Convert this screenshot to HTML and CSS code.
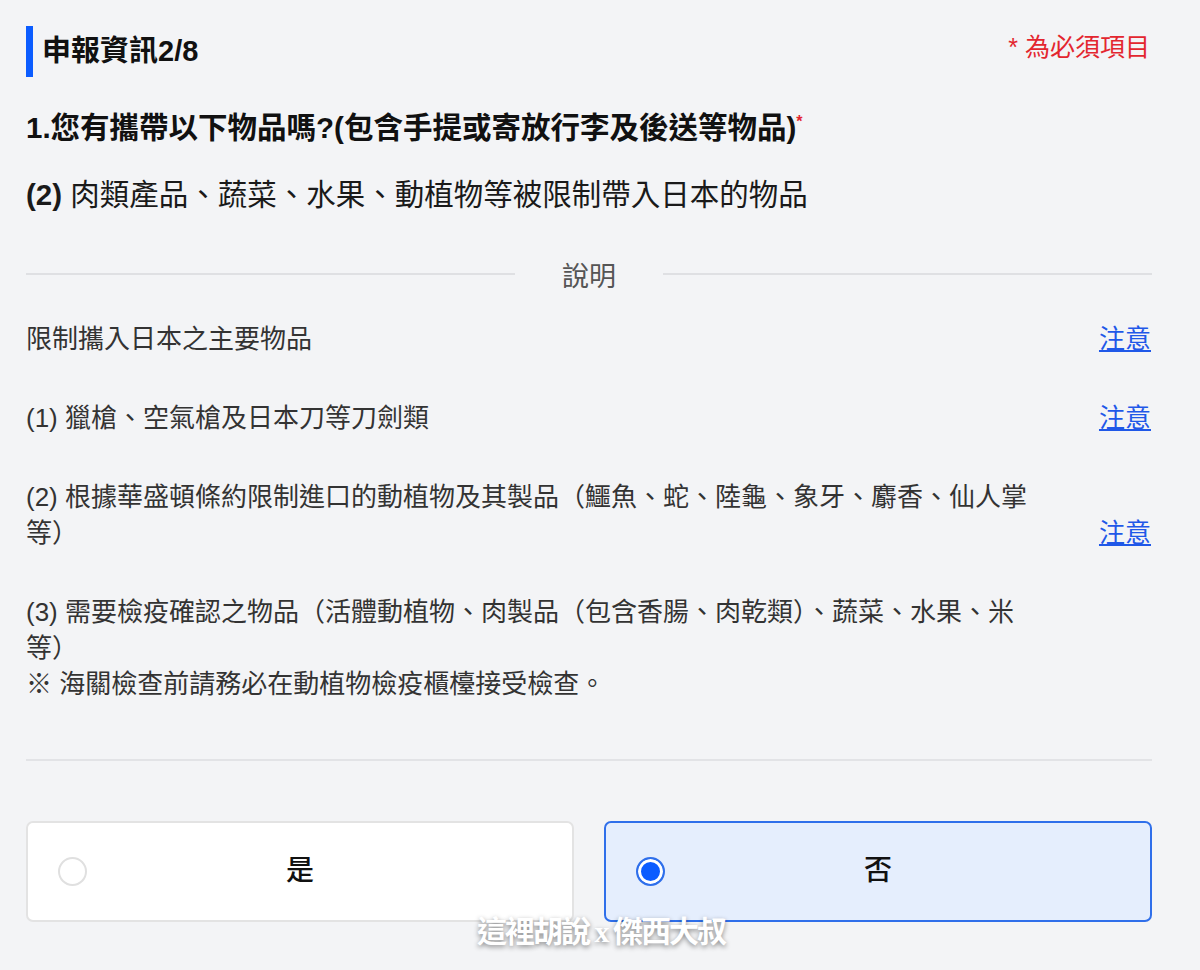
FILE: index.html
```html
<!DOCTYPE html>
<html lang="zh-Hant">
<head>
    <meta charset="UTF-8">
    <meta name="viewport" content="width=device-width, initial-scale=1.0">
    <title>申報資訊</title>
    <link rel="stylesheet" href="styles.css">
</head>
<body>

    <div class="container">
        <div class="header">
            <h2 class="title">申報資訊2/8</h2>
            <span class="required">* 為必須項目</span>
        </div>

        <p class="question">1.您有攜帶以下物品嗎?(包含手提或寄放行李及後送等物品)<span class="star">*</span></p>
        <p class="item"><b>(2)</b> 肉類產品、蔬菜、水果、動植物等被限制帶入日本的物品</p>

        <div class="divider"><span>說明</span></div>

        <ul class="notes">
            <li><span class="note-text">限制攜入日本之主要物品</span><a href="#">注意</a></li>
            <li><span class="note-text">(1) 獵槍、空氣槍及日本刀等刀劍類</span><a href="#">注意</a></li>
            <li><span class="note-text">(2) 根據華盛頓條約限制進口的動植物及其製品（鱷魚、蛇、陸龜、象牙、麝香、仙人掌等）</span><a href="#">注意</a></li>
            <li><span class="note-text">(3) 需要檢疫確認之物品（活體動植物、肉製品（包含香腸、肉乾類）、蔬菜、水果、米等）<br>※ 海關檢查前請務必在動植物檢疫櫃檯接受檢查。</span></li>
        </ul>

        <hr class="line">

        <div class="choices">
            <label class="choice">
                <input type="radio" name="answer" value="yes">
                <span class="choice-label">是</span>
            </label>
            <label class="choice checked">
                <input type="radio" name="answer" value="no" checked>
                <span class="choice-label">否</span>
            </label>
        </div>
    </div>

    <div class="watermark">這裡胡說 x 傑西大叔</div>

</body>
</html>
```

FILE: styles.css
```css
body {
    font-family: "Liberation Sans", "Noto Sans CJK TC", sans-serif;
    margin: 0;
    padding: 0;
    background-color: #f3f4f6;
    color: #222;
    position: relative;
    height: 970px;
    overflow: hidden;
}

.container {
    width: 1126px;
    padding: 26px 0 0 26px;
}

.header {
    display: flex;
    justify-content: space-between;
    align-items: center;
    height: 51px;
}

.title {
    margin: 0;
    height: 51px;
    line-height: 51px;
    border-left: 7px solid #0b5cff;
    padding-left: 9px;
    font-size: 29px;
    font-weight: bold;
    color: #111;
}

.required {
    color: #e3262f;
    font-size: 25px;
    line-height: 30px;
    margin: 0 2px 10px 0;
}

.question {
    margin: 33px 0 0;
    font-size: 29.5px;
    line-height: 36px;
    font-weight: bold;
    color: #111;
}

.star {
    color: #e3262f;
    font-size: 16px;
    vertical-align: top;
    line-height: 24px;
}

.item {
    margin: 31px 0 0;
    font-size: 29.5px;
    line-height: 36px;
    color: #1a1a1a;
}

.divider {
    margin-top: 43px;
    display: flex;
    align-items: center;
    height: 36px;
}

.divider::before,
.divider::after {
    content: "";
    flex: 1;
    height: 2px;
    background-color: #dfe0e3;
}

.divider span {
    padding: 0 47px;
    font-size: 27px;
    color: #555;
}

.notes {
    list-style: none;
    margin: 29px 0 0;
    padding: 0;
    display: flex;
    flex-direction: column;
    gap: 43px;
}

.notes li {
    display: flex;
    justify-content: space-between;
    align-items: flex-end;
}

.note-text {
    width: 1010px;
    font-size: 26px;
    line-height: 36px;
    color: #333;
}

.notes a {
    font-size: 26px;
    line-height: 36px;
    margin-right: 1px;
    color: #1f58e8;
    text-decoration: underline;
}

.line {
    margin: 57px 0 0;
    border: none;
    height: 2px;
    background-color: #e2e3e6;
}

.choices {
    margin-top: 60px;
    display: grid;
    grid-template-columns: 1fr 1fr;
    gap: 30px;
}

.choice {
    display: grid;
    grid-template-columns: 1fr auto 1fr;
    align-items: center;
    height: 101px;
    box-sizing: border-box;
    padding-left: 30px;
    background-color: #fff;
    border: 2px solid #e3e3e3;
    border-radius: 7px;
    cursor: pointer;
}

.choice.checked {
    background-color: #e5eefd;
    border-color: #2f6fea;
}

.choice input {
    appearance: none;
    margin: 0;
    width: 29px;
    height: 29px;
    border: 2px solid #e0e0e0;
    border-radius: 50%;
    background-color: #fff;
    box-sizing: border-box;
}

.choice input:checked {
    border: 2px solid #2f6fea;
    background-color: #0b5cff;
    box-shadow: inset 0 0 0 3px #fff;
}

.choice-label {
    font-size: 28px;
    font-weight: 500;
    color: #111;
    margin: 0 30px 8px 0;
}

.watermark {
    position: absolute;
    left: 477px;
    top: 907px;
    font-family: "Liberation Serif", "Noto Sans CJK TC", serif;
    font-size: 30px;
    font-weight: bold;
    letter-spacing: -2px;
    color: #fff;
    text-shadow: 0 2px 5px rgba(0, 0, 0, 0.45);
}
```
